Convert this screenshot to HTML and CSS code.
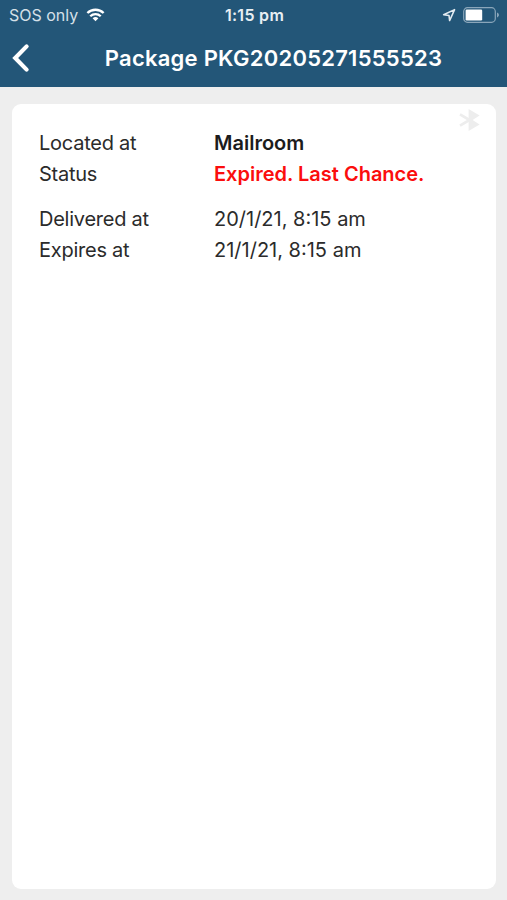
FILE: index.html
```html
<!DOCTYPE html>
<html lang="en">
<head>
  <meta charset="UTF-8" />
  <title>Package PKG20205271555523</title>
  <meta name="viewport" content="width=device-width, initial-scale=1.0">
  <link rel="stylesheet" href="styles.css">
</head>
<body>
  <div class="app">
    <header class="header">
      <div class="status-bar">
        <div class="carrier">
          <span>SOS only</span>
          <svg class="wifi" width="19" height="14" viewBox="0 0 20 15">
            <g fill="none" stroke="#fff" stroke-width="2.5">
              <path d="M1.3 5.4a12.4 12.4 0 0 1 17.4 0" />
              <path d="M4.4 8.8a8 8 0 0 1 11.2 0" />
            </g>
            <path d="M10 14.2 6.9 11.1a4.4 4.4 0 0 1 6.2 0z" fill="#fff" />
          </svg>
        </div>
        <div class="time">1:15 pm</div>
        <div class="indicators">
          <svg class="location" width="14" height="14" viewBox="0 0 14 14">
            <path d="M12.6 1.6 1.6 6.8l5.4.6.6 5.2z" fill="none" stroke="#e3ebf1" stroke-width="1.5" stroke-linejoin="round" />
          </svg>
          <svg class="battery" width="37" height="16" viewBox="0 0 37 16">
            <rect x="0.7" y="0.7" width="31.6" height="14.6" rx="3.8" fill="none" stroke="#8aa6ba" stroke-width="1.2" />
            <rect x="2.6" y="2.6" width="16.6" height="10.8" rx="1.2" fill="#fff" />
            <path d="M34 5.6c2.6.8 2.6 4 0 4.8z" fill="#8aa6ba" />
          </svg>
        </div>
      </div>

      <nav class="nav-bar">
        <button class="back" aria-label="Back">
          <svg width="20" height="30" viewBox="0 0 20 30">
            <path d="M16.6 3.4 5.2 15l11.4 11.6" fill="none" stroke="#fff" stroke-width="4.2" stroke-linecap="round" stroke-linejoin="miter" />
          </svg>
        </button>
        <h1>Package PKG20205271555523</h1>
      </nav>
    </header>

    <main class="card">
      <svg class="bluetooth" width="22" height="22" viewBox="0 0 22 22">
        <path d="M9.6 0 20.6 6.4 13.6 11l7 4.6L9.6 22z" fill="#ededed" />
        <path d="M1 5.4 10.5 11 1 16.6" fill="none" stroke="#ededed" stroke-width="2.8" />
      </svg>

      <dl class="details">
        <div class="row">
          <dt>Located at</dt>
          <dd class="place">Mailroom</dd>
        </div>
        <div class="row">
          <dt>Status</dt>
          <dd class="expired">Expired. Last Chance.</dd>
        </div>
      </dl>

      <dl class="details">
        <div class="row">
          <dt>Delivered at</dt>
          <dd>20/1/21, 8:15 am</dd>
        </div>
        <div class="row">
          <dt>Expires at</dt>
          <dd>21/1/21, 8:15 am</dd>
        </div>
      </dl>
    </main>
  </div>
</body>
</html>
```

FILE: styles.css
```css
:root {
  --primary: #235678;
  --bg: #eeeeee;
  --card-bg: #ffffff;
  --text: #2b2b2b;
  --danger: #fb0d0d;
}

* { box-sizing: border-box; }

body {
  font-family: Inter, "Liberation Sans", sans-serif;
  margin: 0;
  background: var(--bg);
  color: var(--text);
}

.app {
  display: flex;
  flex-direction: column;
  height: 100vh;
}

.header {
  height: 87px;
  background: var(--primary);
  color: #fff;
}

.status-bar {
  display: grid;
  grid-template-columns: 1fr auto 1fr;
  align-items: center;
  height: 30px;
  padding: 0 7px 0 9px;
}

.carrier {
  display: flex;
  align-items: center;
  gap: 8px;
  font-size: 16px;
  color: #d5e0e8;
}

.time {
  font-size: 16px;
  font-weight: 600;
  letter-spacing: 0.3px;
  color: #e8eff4;
}

.indicators {
  display: flex;
  align-items: center;
  justify-content: flex-end;
  gap: 7px;
}

.nav-bar {
  display: flex;
  align-items: center;
  height: 56px;
}

.back {
  display: flex;
  width: 40px;
  padding: 0 0 0 10px;
  border: none;
  background: none;
  cursor: pointer;
}

h1 {
  flex: 1;
  margin: 0;
  text-align: center;
  font-size: 22px;
  font-weight: 600;
  letter-spacing: 0.25px;
}

.card {
  position: relative;
  flex: 1;
  margin: 17px 11px 11px 12px;
  padding: 24px 27px;
  background: var(--card-bg);
  border-radius: 9px;
}

.bluetooth {
  position: absolute;
  top: 5px;
  right: 15px;
}

.details {
  margin: 0 0 14px;
  font-size: 20px;
  line-height: 31px;
}

.row {
  display: flex;
}

dt {
  width: 175px;
  letter-spacing: -0.25px;
}

dd {
  margin: 0;
}

.place,
.expired {
  font-weight: 600;
}

.place {
  color: #1c1c1c;
}

.expired {
  color: var(--danger);
}
```
